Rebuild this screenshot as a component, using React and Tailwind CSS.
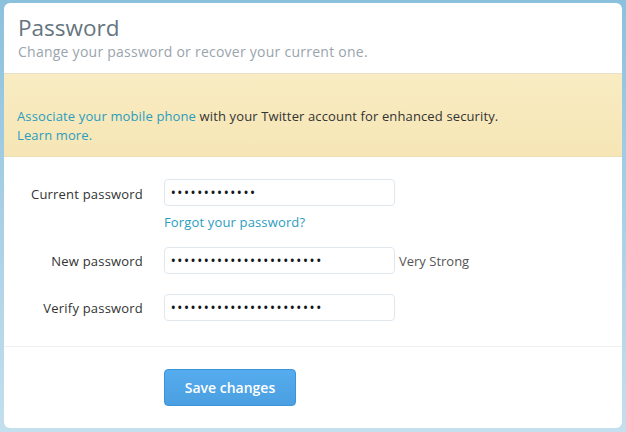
export default function App() {
  const font = { fontFamily: '"Open Sans", "Liberation Sans", sans-serif' };
  const Field = ({ dots }) => (
    <div className="w-[231px] h-[27px] border border-[#e1e8ed] rounded-[4px] bg-white flex items-center pl-[6px] text-[#14171a] text-[12px] tracking-[2.1px] leading-none font-semibold">
      {"•".repeat(dots)}
    </div>
  );
  return (
    <div className="w-[626px] h-[432px] bg-gradient-to-b from-[#8cc1dd] to-[#c4dfee] pt-[3px] px-[4px] pb-[4px]" style={font}>
      <div className="h-full bg-white rounded-[6px] overflow-hidden flex flex-col">
        <div className="h-[71px] pl-[14px] pt-[11px] border-b border-[#e6e0c8]">
          <div className="text-[22.5px] leading-[27px] text-[#66757f]">Password</div>
          <div className="text-[14px] leading-[20px] tracking-[0.25px] text-[#99a4ad] mt-[1px]">Change your password or recover your current one.</div>
        </div>
        <div className="h-[83px] bg-gradient-to-b from-[#f9ecc2] to-[#f6e6b6] border-b border-[#ecdfb5] pl-[13px] pt-[33px] text-[13px] leading-[19px] tracking-[0.13px] text-[#333]">
          <div><span className="text-[#2a9dbf]">Associate your mobile phone</span> with your Twitter account for enhanced security.</div>
          <div className="text-[#2a9dbf]">Learn more.</div>
        </div>
        <div className="h-[190px] border-b border-[#eef0f2] pt-[22px]">
          <div className="flex items-center">
            <div className="w-[139px] text-right text-[13px] text-[#333] pt-[4px] tracking-[0.2px]">Current password</div>
            <div className="ml-[21px]"><Field dots={13} /></div>
          </div>
          <div className="ml-[160px] mt-[8px] text-[13px] leading-[17px] tracking-[0.15px] text-[#2a9dbf]">Forgot your password?</div>
          <div className="flex items-center mt-[16px]">
            <div className="w-[139px] text-right text-[13px] text-[#333] pt-[3px] tracking-[0.2px]">New password</div>
            <div className="ml-[21px]"><Field dots={23} /></div>
            <div className="ml-[4px] text-[13px] text-[#555] pt-[2px]">Very Strong</div>
          </div>
          <div className="flex items-center mt-[20px]">
            <div className="w-[139px] text-right text-[13px] text-[#333] pt-[3px] tracking-[0.2px]">Verify password</div>
            <div className="ml-[21px]"><Field dots={23} /></div>
          </div>
        </div>
        <div className="flex-1 pl-[160px] pt-[22px]">
          <button className="w-[132px] h-[37px] rounded-[4px] bg-gradient-to-b from-[#55acee] to-[#4a9fe0] border border-[#3b94d9] text-white text-[14px] font-semibold">Save changes</button>
        </div>
      </div>
    </div>
  );
}
